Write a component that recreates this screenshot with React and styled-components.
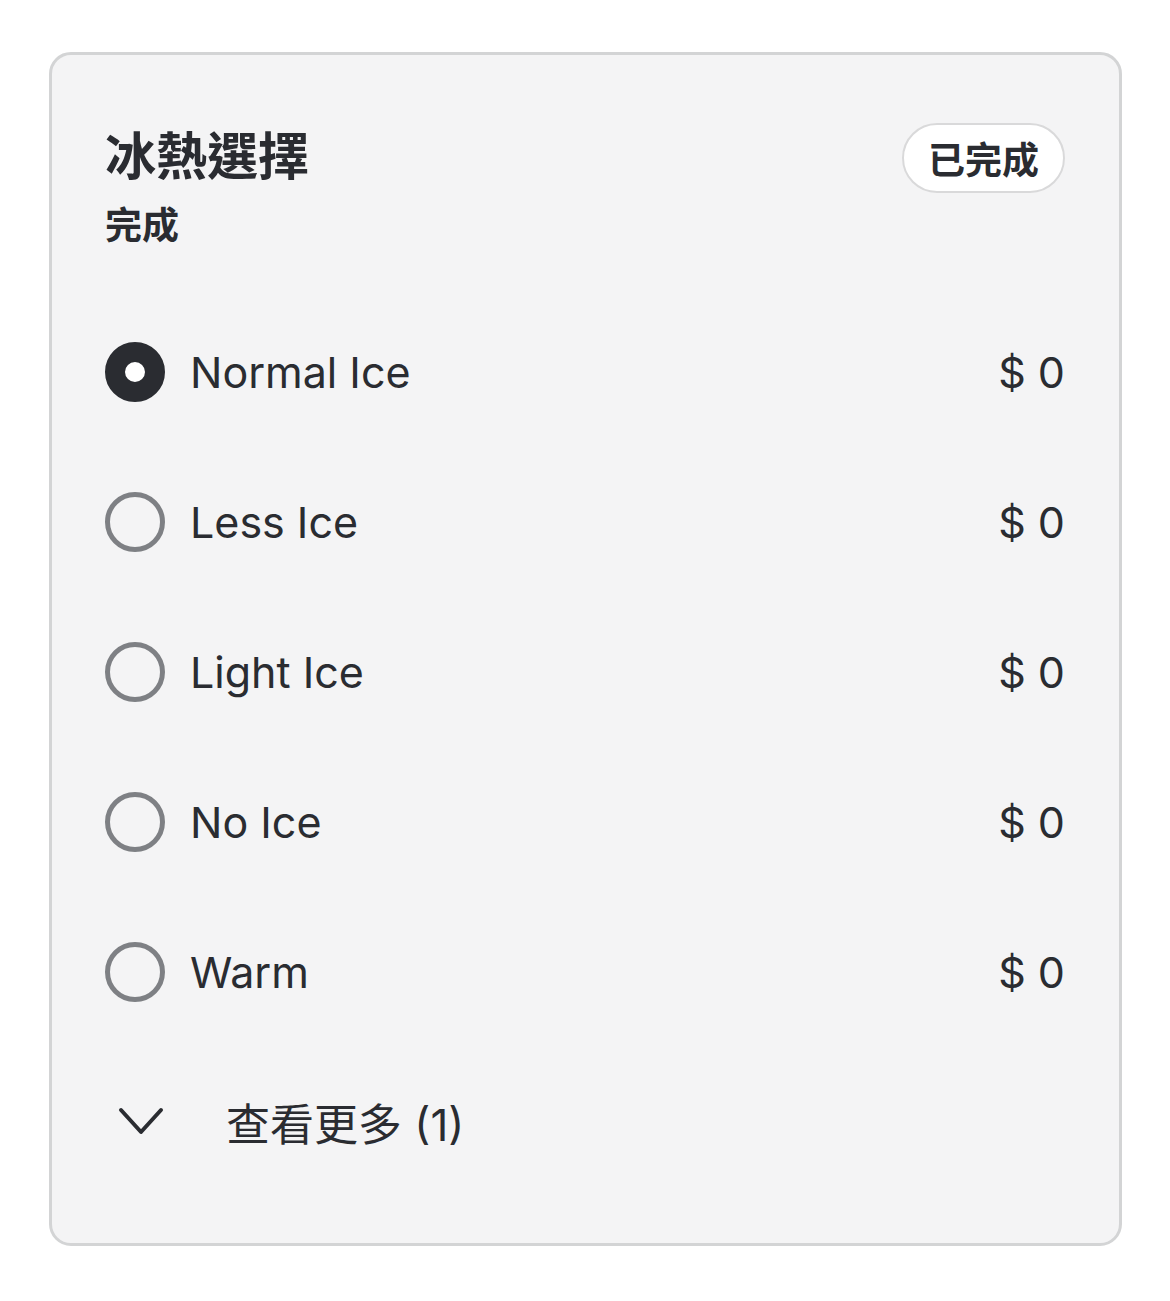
import React from 'react'
import styled, { createGlobalStyle } from 'styled-components'

const GlobalStyle = createGlobalStyle`
  html, body {
    margin: 0;
    padding: 0;
    background: #ffffff;
  }
  body {
    font-family: 'Inter', 'Noto Sans CJK TC', sans-serif;
    color: #2a2c31;
  }
`

const Page = styled.div`
  padding: 52px 48px 56px 49px;
`

const Card = styled.section`
  box-sizing: border-box;
  background: #f4f4f5;
  border: 3px solid #d3d4d5;
  border-radius: 22px;
  padding: 70px 54px 46px 53px;
`

const Header = styled.div`
  display: flex;
  justify-content: space-between;
  align-items: flex-start;
  margin-bottom: 47px;
`

const TitleBlock = styled.div`
  display: flex;
  flex-direction: column;
`

const Title = styled.h2`
  margin: 0;
  font-family: 'Inter', 'Noto Sans CJK TC', sans-serif;
  font-size: 51px;
  line-height: 64px;
  font-weight: 700;
  color: #2a2c31;
`

const Subtitle = styled.div`
  margin-top: 13px;
  font-size: 37px;
  line-height: 48px;
  font-weight: 700;
  color: #2a2c31;
`

const Badge = styled.span`
  box-sizing: border-box;
  display: inline-flex;
  align-items: center;
  justify-content: center;
  height: 70px;
  padding: 0 24px;
  margin-top: -2px;
  border: 2px solid #d9d9da;
  border-radius: 35px;
  background: #ffffff;
  font-size: 37px;
  font-weight: 700;
  color: #2a2c31;
`

const List = styled.div`
  display: flex;
  flex-direction: column;
`

const Row = styled.label`
  display: flex;
  align-items: center;
  height: 150px;
  cursor: pointer;
`

const Radio = styled.span`
  box-sizing: border-box;
  flex: none;
  width: 60px;
  height: 60px;
  border-radius: 50%;
  border: ${p => (p.$checked ? '20px solid #2a2c31' : '5px solid #7e8084')};
  background: ${p => (p.$checked ? '#ffffff' : 'transparent')};
`

const Label = styled.span`
  flex: 1;
  margin-left: 25px;
  font-size: 43px;
  font-weight: 400;
  color: #2a2c31;
`

const Price = styled.span`
  font-size: 43px;
  font-weight: 400;
  color: #2a2c31;
`

const MoreRow = styled.button`
  display: flex;
  align-items: center;
  height: 150px;
  padding: 0;
  border: 0;
  background: transparent;
  cursor: pointer;
  font-family: 'Inter', 'Noto Sans CJK TC', sans-serif;
  color: #2a2c31;
`

const Chevron = styled.svg`
  flex: none;
  margin-left: 13px;
`

const MoreText = styled.span`
  margin-left: 62px;
  font-size: 44px;
  font-weight: 400;
`

const options = [
  { name: 'Normal Ice', price: '$ 0', checked: true },
  { name: 'Less Ice', price: '$ 0' },
  { name: 'Light Ice', price: '$ 0' },
  { name: 'No Ice', price: '$ 0' },
  { name: 'Warm', price: '$ 0' },
]

const App = () => {
  return (
    <Page>
      <GlobalStyle />
      <Card>
        <Header>
          <TitleBlock>
            <Title>冰熱選擇</Title>
            <Subtitle>完成</Subtitle>
          </TitleBlock>
          <Badge>已完成</Badge>
        </Header>
        <List>
          {options.map(o => (
            <Row key={o.name}>
              <Radio $checked={o.checked} />
              <Label>{o.name}</Label>
              <Price>{o.price}</Price>
            </Row>
          ))}
          <MoreRow>
            <Chevron width="46" height="30" viewBox="0 0 46 30">
              <polyline
                points="3,3 23,25 43,3"
                fill="none"
                stroke="#2a2c31"
                strokeWidth="4"
                strokeLinecap="round"
                strokeLinejoin="round"
              />
            </Chevron>
            <MoreText>查看更多 (1)</MoreText>
          </MoreRow>
        </List>
      </Card>
    </Page>
  )
}

export default App
